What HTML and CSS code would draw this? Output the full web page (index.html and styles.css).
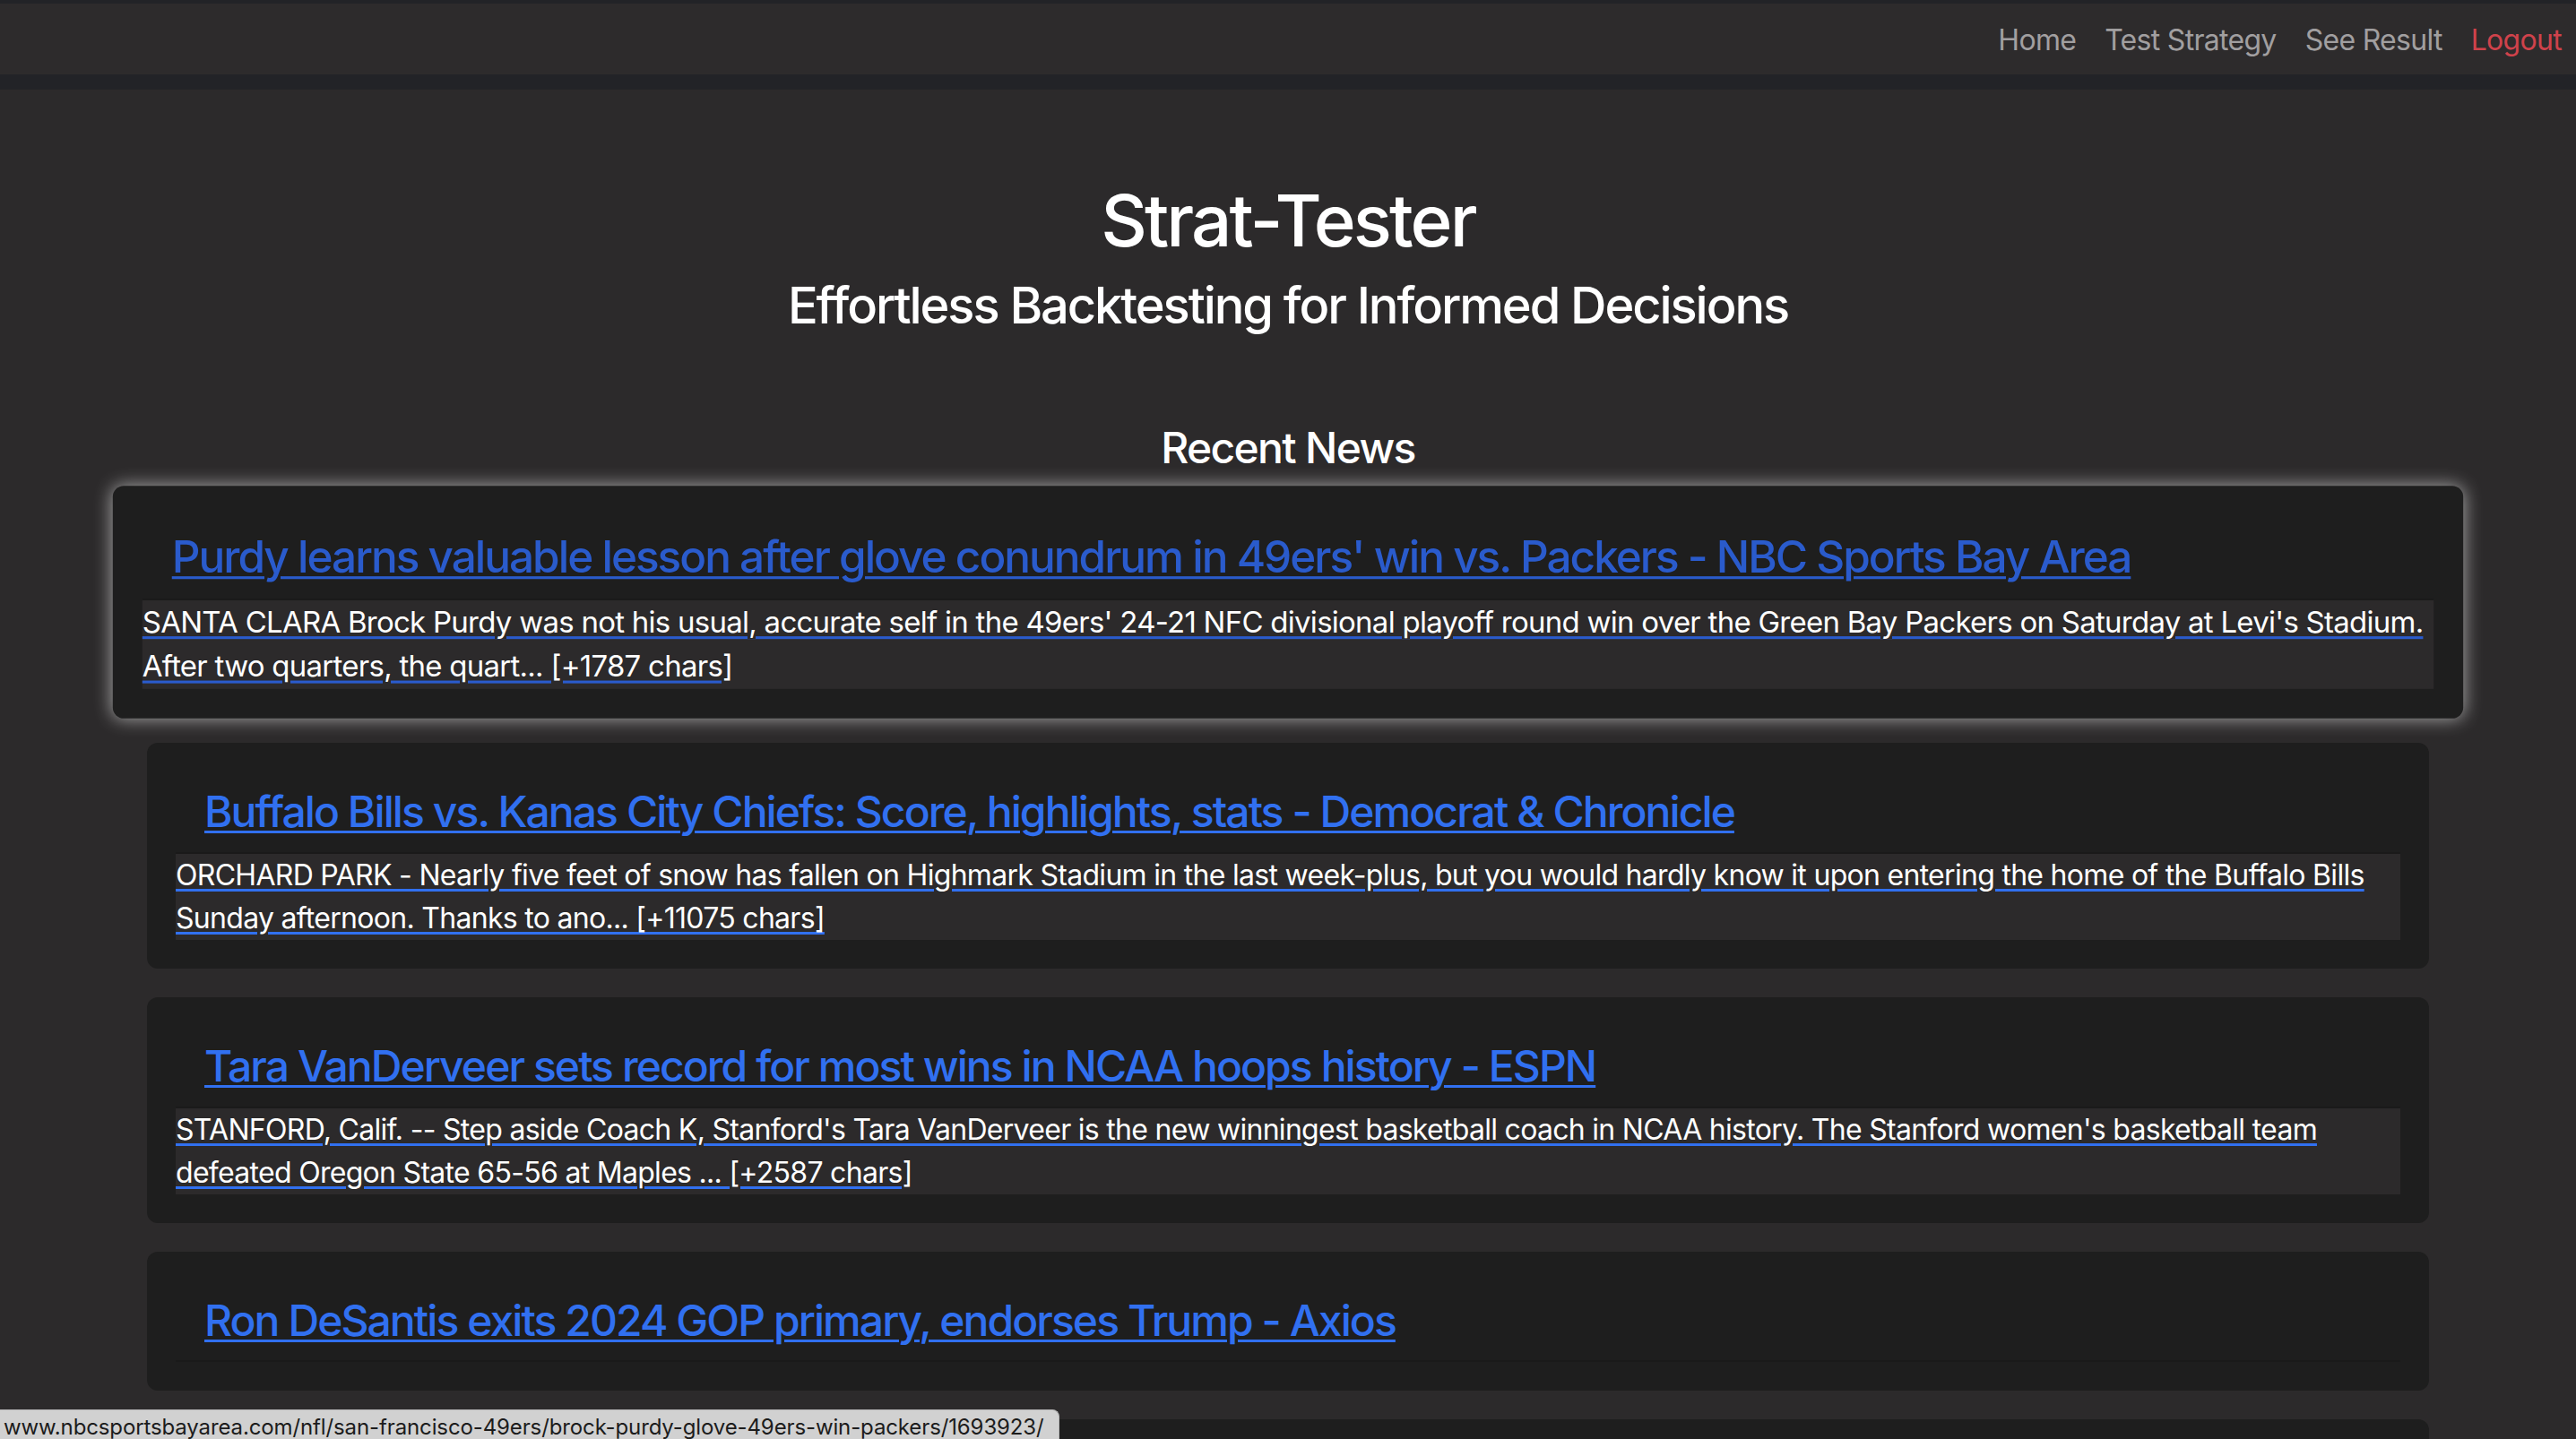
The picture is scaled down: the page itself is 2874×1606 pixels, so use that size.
FILE: index.html
```html
<!DOCTYPE html>
<html lang="en">
<head>
<meta charset="utf-8">
<title>Strat-Tester</title>
<link rel="stylesheet" href="styles.css">
</head>
<body>
<header class="topbar">
  <nav class="nav">
    <a class="nav-link" href="#">Home</a>
    <a class="nav-link" href="#">Test Strategy</a>
    <a class="nav-link" href="#">See Result</a>
    <a class="nav-link nav-danger" href="#">Logout</a>
  </nav>
</header>

<main class="page">
  <h1 class="hero-title">Strat-Tester</h1>
  <h3 class="hero-sub">Effortless Backtesting for Informed Decisions</h3>
  <h4 class="section-title">Recent News</h4>

  <div class="news-list">
    <a class="news-card is-hover" href="#">
      <h4 class="news-title">Purdy learns valuable lesson after glove conundrum in 49ers' win vs. Packers - NBC Sports Bay Area</h4>
      <p class="news-desc">SANTA CLARA Brock Purdy was not his usual, accurate self in the 49ers' 24-21 NFC divisional playoff round win over the Green Bay Packers on Saturday at Levi's Stadium. After two quarters, the quart... [+1787 chars]</p>
    </a>
    <a class="news-card" href="#">
      <h4 class="news-title">Buffalo Bills vs. Kanas City Chiefs: Score, highlights, stats - Democrat &amp; Chronicle</h4>
      <p class="news-desc">ORCHARD PARK - Nearly five feet of snow has fallen on Highmark Stadium in the last week-plus, but you would hardly know it upon entering the home of the Buffalo Bills Sunday afternoon. Thanks to ano... [+11075 chars]</p>
    </a>
    <a class="news-card" href="#">
      <h4 class="news-title">Tara VanDerveer sets record for most wins in NCAA hoops history - ESPN</h4>
      <p class="news-desc">STANFORD, Calif. -- Step aside Coach K, Stanford's Tara VanDerveer is the new winningest basketball coach in NCAA history. The Stanford women's basketball team defeated Oregon State 65-56 at Maples ... [+2587 chars]</p>
    </a>
    <a class="news-card" href="#">
      <h4 class="news-title">Ron DeSantis exits 2024 GOP primary, endorses Trump - Axios</h4>
      <p class="news-desc"></p>
    </a>
    <a class="news-card news-card-tail" href="#"></a>
  </div>
</main>

<div class="status-bar">www.nbcsportsbayarea.com/nfl/san-francisco-49ers/brock-purdy-glove-49ers-win-packers/1693923/</div>
</body>
</html>
```

FILE: styles.css
```css
* {
  box-sizing: border-box;
}

html, body {
  margin: 0;
  padding: 0;
}

body {
  background: #2c2a2b;
  color: #ffffff;
  font-family: Inter, "Noto Sans", "Liberation Sans", sans-serif;
  font-size: 32px;
  line-height: 1.5;
  letter-spacing: -0.022em;
  overflow: hidden;
  height: 1606px;
}

/* ---------- top bar ---------- */
.topbar {
  background: #2d2b2c;
  border-top: 4px solid #222327;
  border-bottom: 17px solid #222327;
}

.nav {
  display: flex;
  justify-content: flex-end;
  padding: 17px 0 14px;
}

.nav-link {
  color: #a19fa0;
  text-decoration: none;
  padding: 0 16px;
  line-height: 48px;
  font-size: 32px;
}

.nav-danger {
  color: #cf424b;
}

/* ---------- hero ---------- */
.page {
  display: flex;
  flex-direction: column;
  align-items: center;
}

.hero-title {
  margin: 98px 0 0;
  font-size: 80px;
  font-weight: 500;
  line-height: 1.2;
  letter-spacing: -0.036em;
}

.hero-sub {
  margin: 14px 0 0;
  font-size: 56px;
  font-weight: 500;
  line-height: 1.2;
  letter-spacing: -0.037em;
}

.section-title {
  margin: 96px 0 17px;
  font-size: 48px;
  font-weight: 500;
  line-height: 1.2;
  letter-spacing: -0.035em;
}

/* ---------- news ---------- */
.news-list {
  width: 2546px;
  display: flex;
  flex-direction: column;
  gap: 32px;
}

.news-card {
  display: block;
  background: #1e1e1e;
  border-radius: 12px;
  padding: 32px;
  color: #3170f0;
  text-decoration: underline;
  text-decoration-thickness: 3px;
  text-underline-offset: 4px;
}

.news-card.is-hover {
  color: #2a5bcc;
  transform: scale(1.03);
  box-shadow: 0 0 20px rgba(255, 255, 255, 0.6);
}

.news-title {
  margin: 16px 0 16px;
  padding-left: 32px;
  font-size: 48px;
  font-weight: 500;
  line-height: 1.2;
  letter-spacing: -0.04em;
}

.news-desc {
  margin: 0;
  background: #2c2a2b;
  border-top: 2px solid #1a1a1a;
  color: #ffffff;
  font-size: 32px;
  line-height: 48px;
}

.news-card-tail {
  min-height: 250px;
}

/* ---------- browser status bar overlay ---------- */
.status-bar {
  position: fixed;
  left: 0;
  bottom: 0;
  height: 33px;
  overflow: hidden;
  padding: 4px 16px 0 4px;
  background: #d1d1d1;
  border-top: 1px solid #b9b9b9;
  border-right: 1px solid #b9b9b9;
  border-top-right-radius: 8px;
  color: #1c1c1c;
  font-size: 24px;
  line-height: 29px;
  letter-spacing: -0.005em;
  white-space: nowrap;
}
```
